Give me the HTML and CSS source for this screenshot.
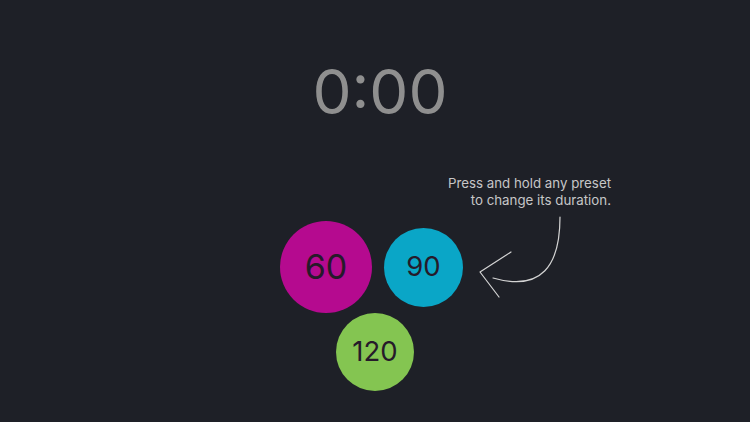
FILE: index.html
```html
<!DOCTYPE html>
<html>
<head>
<meta charset="utf-8">
<link rel="stylesheet" href="styles.css">
</head>
<body>
<div class="screen">
  <div class="timer">0:00</div>
  <div class="presets">
    <div class="row">
      <div class="preset magenta">60</div>
      <div class="preset cyan">90</div>
    </div>
    <div class="preset green">120</div>
  </div>
  <div class="hint">Press and hold any preset<br>to change its duration.</div>
  <svg class="arrow" width="110" height="95" viewBox="0 0 110 95">
    <path d="M90 7 C90 55, 72 82, 23 68" fill="none" stroke="#d4d4d4" stroke-width="1.2" stroke-linecap="round"/>
    <path d="M41 42 L10 62 L29 87" fill="none" stroke="#d4d4d4" stroke-width="1.2" stroke-linecap="round" stroke-linejoin="round"/>
  </svg>
</div>
</body>
</html>
```
FILE: styles.css
```css
html, body {
  margin: 0;
  padding: 0;
  background: #1e2027;
}
.screen {
  position: relative;
  width: 750px;
  height: 422px;
  overflow: hidden;
  display: flex;
  flex-direction: column;
  align-items: center;
  font-family: Inter, "Noto Sans", sans-serif;
}
.timer {
  margin-top: 59px;
  margin-left: 10px;
  font-size: 62px;
  line-height: 66px;
  color: #8f8f8f;
  font-weight: 400;
}
.presets {
  margin-top: 96px;
  display: flex;
  flex-direction: column;
  align-items: center;
}
.row {
  display: flex;
  align-items: center;
  gap: 12px;
  margin-left: -7px;
}
.preset {
  border-radius: 50%;
  display: flex;
  align-items: center;
  justify-content: center;
  color: #261a2a;
  flex: none;
  box-sizing: border-box;
  padding-bottom: 2px;
}
.magenta {
  width: 92px;
  height: 92px;
  background: #b50a8f;
  font-size: 34px;
}
.cyan {
  width: 79px;
  height: 79px;
  background: #0aa6c7;
  font-size: 27.5px;
}
.green {
  width: 78px;
  height: 78px;
  background: #84c551;
  font-size: 27.5px;
}
.hint {
  position: absolute;
  right: 139px;
  top: 175px;
  text-align: right;
  font-size: 13.3px;
  line-height: 16.5px;
  color: #c6c6c8;
}
.arrow {
  position: absolute;
  left: 470px;
  top: 210px;
}
```
